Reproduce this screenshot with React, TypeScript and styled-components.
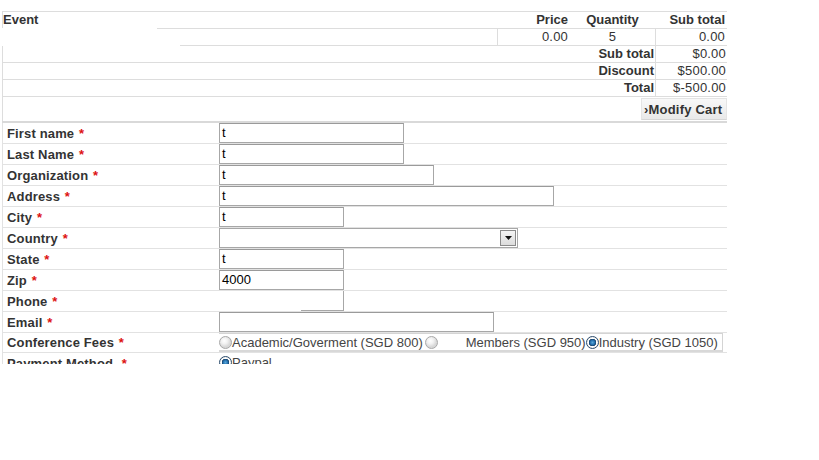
import React from 'react';
import styled, { createGlobalStyle } from 'styled-components';

const Global = createGlobalStyle`
  html, body { margin: 0; padding: 0; background: #fff; }
  body { font-family: "Liberation Sans", Arial, sans-serif; font-size: 13px; color: #333; }
  * { box-sizing: border-box; }
`;

const Viewport = styled.div`
  width: 819px;
  height: 364px;
  overflow: hidden;
  padding-top: 11px;
`;

const Cart = styled.section`
  margin-left: 2px;
  width: 725px;
`;

const HeadRow = styled.div`
  display: grid;
  grid-template-columns: 1fr 73px 85px 72px;
  height: 17px;
  line-height: 16px;
  border-top: 1px solid #ddd;
  border-left: 1px solid #ddd;
  font-weight: bold;
`;

const HeadCell = styled.div<{ $align?: string }>`
  text-align: ${(p) => p.$align || 'left'};
  padding-right: ${(p) => (p.$align === 'right' ? '2px' : '0')};
`;

const Rule = styled.div<{ $indent?: number; $thick?: boolean; $color?: string }>`
  height: ${(p) => (p.$thick ? '2px' : '1px')};
  margin-left: ${(p) => p.$indent || 0}px;
  background: ${(p) => p.$color || '#ddd'};
`;

const ItemRow = styled.div`
  display: grid;
  grid-template-columns: 1fr 73px 85px 72px;
  height: 16px;
  line-height: 16px;
`;

const ItemCell = styled.div<{ $align?: string; $divider?: boolean }>`
  text-align: ${(p) => p.$align || 'left'};
  padding-right: ${(p) => (p.$align === 'right' ? '2px' : '0')};
  border-left: ${(p) => (p.$divider ? '1px solid #ddd' : 'none')};
  letter-spacing: 0.2px;
`;

const SummaryRow = styled.div`
  display: grid;
  grid-template-columns: 1fr 72px;
  height: 17px;
  line-height: 16px;
  border-left: 1px solid #ddd;
  border-bottom: 1px solid #ddd;
`;

const SummaryLabel = styled.div`
  text-align: right;
  font-weight: bold;
  padding-right: 1px;
`;

const SummaryValue = styled.div`
  text-align: right;
  border-left: 1px solid #ddd;
  padding-right: 1px;
  letter-spacing: 0.2px;
`;

const ButtonRow = styled.div`
  display: flex;
  justify-content: flex-end;
  align-items: flex-start;
  height: 24px;
  padding-top: 1px;
  border-left: 1px solid #ddd;
`;

const CartButton = styled.button`
  width: 86px;
  height: 22px;
  padding: 0 0 0 2px;
  border: 1px solid #e4e4e4;
  border-bottom-color: #d6d6d6;
  background: linear-gradient(#f8f8f8, #e9e9e9);
  font-family: "Liberation Sans", Arial, sans-serif;
  font-size: 13px;
  font-weight: bold;
  letter-spacing: 0.2px;
  color: #333;
  text-align: left;
  white-space: nowrap;
`;

const Form = styled.section`
  margin-left: 2px;
  width: 725px;
`;

const FormRow = styled.div<{ $h?: number }>`
  display: grid;
  grid-template-columns: 216px 1fr;
  align-items: center;
  height: ${(p) => (p.$h || 21)}px;
  border-left: 1px solid #e2e2e2;
  border-bottom: 1px solid #e2e2e2;
`;

const Label = styled.div`
  padding-left: 4px;
  font-weight: bold;
  letter-spacing: 0.15px;
  color: #333;
  white-space: pre;
`;

const Req = styled.span`
  color: #d11;
  margin-left: 1px;
`;

const Field = styled.div`
  display: flex;
  align-items: center;
  height: 100%;
`;

const TextInput = styled.div<{ $w: number }>`
  width: ${(p) => p.$w}px;
  height: 20px;
  border: 1px solid #a7a7a7;
  border-top-color: #9a9a9a;
  padding-left: 2px;
  line-height: 18px;
  color: #000;
  background: #fff;
`;

const GhostInput = styled.div<{ $w: number }>`
  width: ${(p) => p.$w}px;
  height: 20px;
  border-right: 1px solid #a7a7a7;
  background: linear-gradient(#a7a7a7, #a7a7a7) no-repeat right bottom / 42px 1px;
`;

const SelectBox = styled.div`
  width: 299px;
  height: 20px;
  border: 1px solid #a7a7a7;
  display: flex;
  justify-content: flex-end;
  align-items: center;
  padding-right: 1px;
`;

const SelectArrow = styled.div`
  width: 16px;
  height: 16px;
  border: 1px solid #8a8a8a;
  background: linear-gradient(#f4f4f4, #dcdcdc);
  display: flex;
  align-items: center;
  justify-content: center;
`;

const FeeBox = styled.div`
  display: flex;
  align-items: center;
  width: 504px;
  height: 19px;
  border-top: 1px solid #d4d4d4;
  border-bottom: 2px solid #d8d8d8;
  border-right: 1px solid #d4d4d4;
  color: #444;
`;

const Option = styled.label<{ $gap?: number }>`
  display: inline-flex;
  align-items: center;
  white-space: pre;
  margin-right: ${(p) => p.$gap || 0}px;
`;

const OptionText = styled.span<{ $lead?: number }>`
  margin-left: ${(p) => p.$lead || 0}px;
`;

const Radio = styled.span<{ $on?: boolean }>`
  display: inline-block;
  width: 13px;
  height: 13px;
  border-radius: 50%;
  border: 1px solid ${(p) => (p.$on ? '#2c4c6c' : '#a8a8a8')};
  background: ${(p) =>
    p.$on
      ? 'radial-gradient(circle at 50% 50%, #5aa8da 0, #1f6aa8 2.5px, #163f66 3.5px, #fff 4px, #e8e8e8 6px)'
      : 'radial-gradient(circle at 40% 35%, #fff 0, #f2f2f2 3px, #d8d8d8 6px)'};
  flex: none;
`;

const PayField = styled.div`
  display: flex;
  align-items: center;
  color: #444;
  align-self: start;
  padding-top: 2px;
`;

type Row = { label: string; field: React.ReactNode };

const Arrow = () => (
  <svg width="7" height="4" viewBox="0 0 7 4">
    <path d="M0 0h7L3.5 4z" fill="#111" />
  </svg>
);

const rows: Row[] = [
  { label: 'First name', field: <TextInput $w={185}>t</TextInput> },
  { label: 'Last Name', field: <TextInput $w={185}>t</TextInput> },
  { label: 'Organization', field: <TextInput $w={215}>t</TextInput> },
  { label: 'Address', field: <TextInput $w={335}>t</TextInput> },
  { label: 'City', field: <TextInput $w={125}>t</TextInput> },
  {
    label: 'Country',
    field: (
      <SelectBox>
        <SelectArrow>
          <Arrow />
        </SelectArrow>
      </SelectBox>
    ),
  },
  { label: 'State', field: <TextInput $w={125}>t</TextInput> },
  { label: 'Zip', field: <TextInput $w={125}>4000</TextInput> },
  { label: 'Phone', field: <GhostInput $w={125} /> },
  { label: 'Email', field: <TextInput $w={275} /> },
];

export default function App() {
  return (
    <>
      <Global />
      <Viewport>
        <Cart>
          <HeadRow>
            <HeadCell>Event</HeadCell>
            <HeadCell $align="right">Price</HeadCell>
            <HeadCell $align="center">Quantity</HeadCell>
            <HeadCell $align="right">Sub total</HeadCell>
          </HeadRow>
          <Rule $indent={155} />
          <ItemRow>
            <ItemCell />
            <ItemCell $align="right" $divider>0.00</ItemCell>
            <ItemCell $align="center">5</ItemCell>
            <ItemCell $align="right" $divider>0.00</ItemCell>
          </ItemRow>
          <Rule $indent={178} />
          <SummaryRow>
            <SummaryLabel>Sub total</SummaryLabel>
            <SummaryValue>$0.00</SummaryValue>
          </SummaryRow>
          <SummaryRow>
            <SummaryLabel>Discount</SummaryLabel>
            <SummaryValue>$500.00</SummaryValue>
          </SummaryRow>
          <SummaryRow>
            <SummaryLabel>Total</SummaryLabel>
            <SummaryValue>$-500.00</SummaryValue>
          </SummaryRow>
          <ButtonRow>
            <CartButton type="button">›Modify Cart</CartButton>
          </ButtonRow>
          <Rule $thick $color="#d9d9d9" />
        </Cart>
        <Form>
          {rows.map((r) => (
            <FormRow key={r.label}>
              <Label>
                {r.label} <Req>*</Req>
              </Label>
              <Field>{r.field}</Field>
            </FormRow>
          ))}
          <FormRow $h={20}>
            <Label>
              Conference Fees <Req>*</Req>
            </Label>
            <Field>
              <FeeBox>
                <Option $gap={2}>
                  <Radio />
                  <OptionText>Academic/Goverment (SGD 800)</OptionText>
                </Option>
                <Option>
                  <Radio />
                  <OptionText $lead={28}>Members (SGD 950)</OptionText>
                </Option>
                <Option $gap={4}>
                  <Radio $on />
                  <OptionText>Industry (SGD 1050)</OptionText>
                </Option>
              </FeeBox>
            </Field>
          </FormRow>
          <FormRow>
            <Label>
              Payment Method {' '}<Req>*</Req>
            </Label>
            <PayField>
              <Radio $on />
              <OptionText>Paypal</OptionText>
            </PayField>
          </FormRow>
        </Form>
      </Viewport>
    </>
  );
}
